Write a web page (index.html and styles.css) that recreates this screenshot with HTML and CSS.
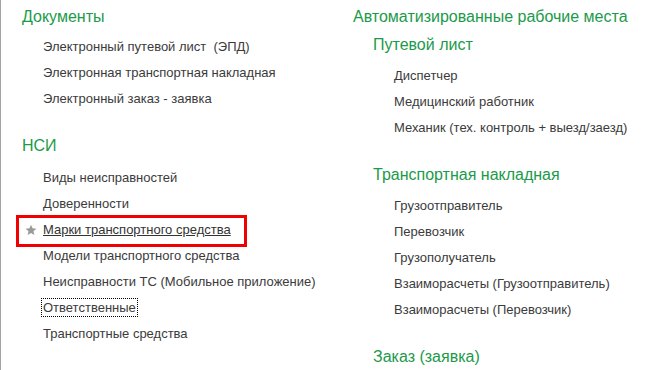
FILE: index.html
```html
<!DOCTYPE html>
<html lang="ru">
<head>
  <meta charset="UTF-8" />
  <title>Разделы</title>
  <link rel="stylesheet" href="styles.css">
</head>
<body>
  <div class="panel">
    <div class="column left">
      <div class="section">
        <h2>Документы</h2>
        <ul class="items">
          <li>Электронный путевой лист&nbsp; (ЭПД)</li>
          <li>Электронная транспортная накладная</li>
          <li>Электронный заказ - заявка</li>
        </ul>
      </div>
      <div class="section">
        <h2>НСИ</h2>
        <ul class="items">
          <li>Виды неисправностей</li>
          <li>Доверенности</li>
          <li class="favorite">
            <span class="star">
              <svg width="12" height="12" viewBox="0 0 24 24"><path d="M12 1.5l3.1 7.1 7.7.7-5.8 5.1 1.7 7.6L12 18l-6.7 4 1.7-7.6-5.8-5.1 7.7-.7z" fill="#9a9a9a"/></svg>
            </span>
            <a class="marked">Марки транспортного средства</a>
          </li>
          <li>Модели транспортного средства</li>
          <li>Неисправности ТС (Мобильное приложение)</li>
          <li><span class="focused">Ответственные</span></li>
          <li>Транспортные средства</li>
        </ul>
      </div>
    </div>

    <div class="column right">
      <h2>Автоматизированные рабочие места</h2>
      <div class="group">
        <h3>Путевой лист</h3>
        <ul class="items">
          <li>Диспетчер</li>
          <li>Медицинский работник</li>
          <li>Механик (тех. контроль + выезд/заезд)</li>
        </ul>
      </div>
      <div class="group">
        <h3>Транспортная накладная</h3>
        <ul class="items">
          <li>Грузоотправитель</li>
          <li>Перевозчик</li>
          <li>Грузополучатель</li>
          <li>Взаиморасчеты (Грузоотправитель)</li>
          <li>Взаиморасчеты (Перевозчик)</li>
        </ul>
      </div>
      <div class="group">
        <h3>Заказ (заявка)</h3>
      </div>
    </div>
  </div>
</body>
</html>
```

FILE: styles.css
```css
body {
  margin: 0;
  background: #fff;
  font-family: 'Liberation Sans', Arial, sans-serif;
  overflow: hidden;
}
.panel {
  display: flex;
  height: 370px;
  border-left: 1px solid #a3a3a3;
  padding-top: 7px;
  box-sizing: border-box;
}
.column.left {
  width: 330px;
  padding-left: 21px;
}
.column.right {
  padding-left: 1px;
}
h2, h3 {
  margin: 0;
  font-size: 16px;
  line-height: 20px;
  font-weight: normal;
  color: #1b9a4a;
}
.section + .section {
  margin-top: 24px;
}
.section h2 {
  margin-bottom: 7px;
}
.section + .section h2 {
  margin-bottom: 9px;
}
.group {
  padding-left: 20px;
  margin-top: 8px;
}
.group + .group {
  margin-top: 24px;
}
.group h3 {
  margin-bottom: 8px;
}
.items {
  list-style: none;
  margin: 0;
  padding: 0 0 0 21px;
}
.items li {
  font-size: 13px;
  line-height: 26px;
  color: #3b3b3b;
  white-space: nowrap;
}
.favorite {
  position: relative;
}
.favorite::after {
  content: "";
  position: absolute;
  left: -27px;
  top: -2px;
  width: 225px;
  height: 26px;
  border: 3px solid #f00000;
}
.star {
  position: absolute;
  left: -18px;
  top: 7px;
  line-height: 0;
}
.marked {
  color: #333;
  text-decoration: underline;
}
.focused {
  outline: 1px dotted #000;
  outline-offset: 1px;
}
```
